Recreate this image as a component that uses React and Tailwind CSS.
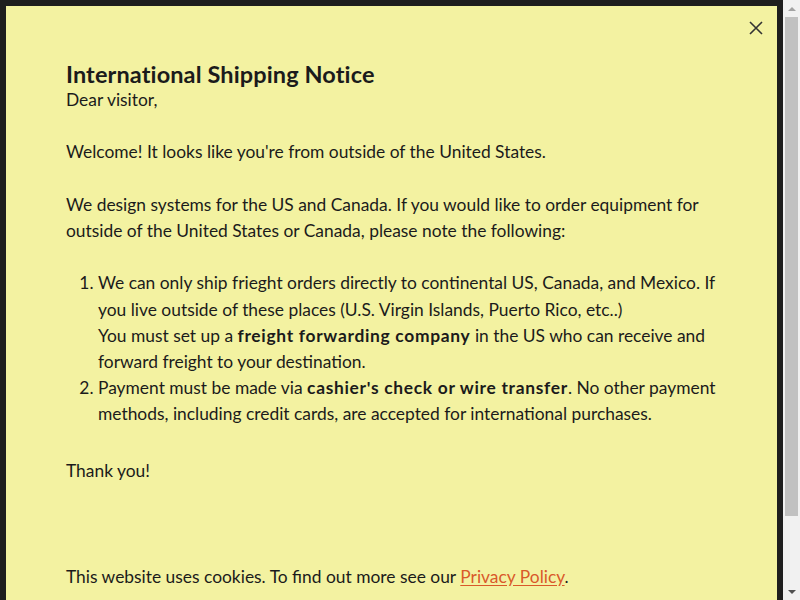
export default function App() {
  return (
    <div className="w-[800px] h-[600px] bg-[#1e1e1e] flex overflow-hidden" style={{ fontFamily: "Lato, 'Open Sans', sans-serif" }}>
      {/* page behind the modal */}
      <div className="flex-1 pl-[6px] pt-[6px] pr-[6px] flex">
        <div className="relative flex-1 bg-[#f3f2a1] text-[#1b1b1b] px-[60px] pt-[55px] text-[17.4px] leading-[26.2px]">
          <button className="absolute right-[14px] top-[15px] w-[14px] h-[14px] text-[#333]" aria-label="Close">
            <svg viewBox="0 0 14 14" width="14" height="14" stroke="currentColor" strokeWidth="1.6" fill="none">
              <path d="M1 1 L13 13 M13 1 L1 13" />
            </svg>
          </button>

          <h2 className="text-[23.5px] font-bold leading-[26px] tracking-[0.005em]">International Shipping Notice</h2>
          <p className="mb-[26.2px]">Dear visitor,</p>
          <p className="mb-[26.2px]">Welcome! It looks like you're from outside of the United States.</p>
          <p className="mb-[26.2px]">
            We design systems for the US and Canada. If you would like to order equipment for outside of the United States or Canada, please note the following:
          </p>
          <ol className="list-decimal pl-[32px] mb-[30px]">
            <li>
              We can only ship frieght orders directly to continental US, Canada, and Mexico. If you live outside of these places (U.S. Virgin Islands, Puerto Rico, etc..)
              <br />
              You must set up a <b className="tracking-[0.04em]">freight forwarding company</b> in the US who can receive and forward freight to your destination.
            </li>
            <li>
              Payment must be made via <b className="tracking-[0.04em]">cashier's check or wire transfer</b>. No other payment methods, including credit cards, are accepted for international purchases.
            </li>
          </ol>
          <p>Thank you!</p>
          <p className="mt-[80px]">
            This website uses cookies. To find out more see our{" "}
            <a href="#" className="text-[#d9592a] underline underline-offset-2">Privacy Policy</a>.
          </p>
        </div>
      </div>

      {/* scrollbar */}
      <div className="w-[17px] h-full bg-[#f1f1f1] flex flex-col items-center">
        <div className="h-[17px] flex items-center justify-center">
          <div className="w-0 h-0 border-l-[4px] border-r-[4px] border-b-[4px] border-l-transparent border-r-transparent border-b-[#a3a3a3]" />
        </div>
        <div className="w-[13px] h-[499px] bg-[#c1c1c1]" />
        <div className="flex-1" />
        <div className="h-[17px] flex items-center justify-center">
          <div className="w-0 h-0 border-l-[4px] border-r-[4px] border-t-[4px] border-l-transparent border-r-transparent border-t-[#505050]" />
        </div>
      </div>
    </div>
  );
}
